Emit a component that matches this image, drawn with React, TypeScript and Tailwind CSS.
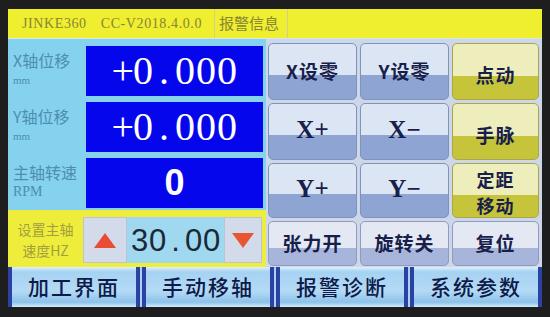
import React from "react";

const cjk = "font-['Noto_Sans_CJK_SC',sans-serif]";
const serif = "font-['Liberation_Serif','Noto_Sans_CJK_SC',serif]";

// fixed-width characters, like the panel's half-width font
function Mono({ text, cell }: { text: string; cell: string }) {
  return (
    <span className="flex">
      {text.split("").map((c, i) => (
        <span key={i} className={"text-center " + cell}>
          {c}
        </span>
      ))}
    </span>
  );
}

function Readout({ label, unit, unitSize, children }: { label: string; unit: string; unitSize: string; children: React.ReactNode }) {
  return (
    <div className="flex h-[50px]">
      <div className="w-[78px] pl-[5px] pt-[5px] text-[#4f8db0]">
        <p className={`${cjk} text-[16px] leading-[18px]`}>{label}</p>
        <p className={`font-['Liberation_Serif',serif] ${unitSize} leading-[14px] mt-[4px]`}>{unit}</p>
      </div>
      <div className="w-[177px] bg-[#0606ec] flex items-center justify-center text-white">{children}</div>
    </div>
  );
}

type Tone = "blue" | "olive" | "grey";

const tones: Record<Tone, string> = {
  blue: "border-[#7f93bd] bg-[linear-gradient(to_bottom,#dce5f3_56%,#8ea5d4_56%)]",
  olive: "border-[#a9a74a] bg-[linear-gradient(to_bottom,#eeedbc_58%,#c6c43a_58%)]",
  grey: "border-[#8f9cc0] bg-[linear-gradient(to_bottom,#e3e8f3_60%,#a8b5da_60%)]",
};

function Key({ tone, children, latin, low }: { tone: Tone; children: React.ReactNode; latin?: boolean; low?: boolean }) {
  return (
    <div
      className={`rounded-[5px] border flex flex-col items-center justify-center text-[#17204a] ${tones[tone]} ${
        low ? "pt-[8px]" : ""
      } ${latin ? "font-['Liberation_Serif',serif] font-bold text-[25px] pb-[3px]" : `${cjk} font-bold text-[19px] tracking-[1px]`}`}
    >
      {children}
    </div>
  );
}

function Tab({ children }: { children: React.ReactNode }) {
  return (
    <div className="flex-1 border-x-[4px] border-[#2b41a4] bg-[linear-gradient(to_bottom,#e0f0fc_0%,#a6d2f2_12%,#b4daf5_60%,#8cc2ea_88%,#d4ecfb_100%)] flex items-center justify-center">
      <span className={`${cjk} font-medium text-[21px] tracking-[2px] text-[#0d1a4a]`}>{children}</span>
    </div>
  );
}

export default function App() {
  return (
    <div className="w-[550px] h-[317px] bg-[#1e1e1e] pt-[9px] pl-[8px]">
      <div className="w-[534px] h-[298px] flex flex-col bg-[#cdd7e9]">
        {/* status bar */}
        <div className="h-[30px] flex bg-[#efee2f] border-b border-[#d4e6ee] text-[#878636]">
          <div className={`w-[207px] border-r border-[#cfcf96] flex items-center pl-[14px] gap-[14px] ${serif} text-[14px] tracking-[0.6px]`}>
            <span>JINKE360</span>
            <span>CC-V2018.4.0.0</span>
          </div>
          <div className={`w-[73px] border-r border-[#cfcf96] flex items-center pl-[4px] ${cjk} text-[15px]`}>报警信息</div>
          <div className="flex-1" />
        </div>

        <div className="flex h-[228px]">
          {/* readouts */}
          <div className="w-[258px] bg-[#84d2ee] flex flex-col">
            <div className="flex flex-col gap-[6px] pt-[7px]">
              <Readout label="X轴位移" unit="mm" unitSize="text-[11px]">
                <span className="font-['Liberation_Serif',serif] text-[40px] leading-none">
                  <Mono text="+0.000" cell="w-[21px]" />
                </span>
              </Readout>
              <Readout label="Y轴位移" unit="mm" unitSize="text-[11px]">
                <span className="font-['Liberation_Serif',serif] text-[40px] leading-none">
                  <Mono text="+0.000" cell="w-[21px]" />
                </span>
              </Readout>
              <Readout label="主轴转速" unit="RPM" unitSize="text-[14px]">
                <span className="font-['Liberation_Sans',sans-serif] font-bold text-[36px] leading-none">0</span>
              </Readout>
            </div>

            {/* spindle speed setter */}
            <div className="mt-[2px] h-[57px] bg-[#eeed3c] flex pt-[7px]">
              <div className={`w-[75px] flex flex-col items-center pt-[2px] text-[#a29f3e] ${cjk} text-[14px] leading-[21px]`}>
                <span>设置主轴</span>
                <span>速度HZ</span>
              </div>
              <div className="w-[44px] h-[46px] bg-[#d3dbea] border border-[#b9c4d8] flex items-center justify-center">
                <svg width="22" height="15" viewBox="0 0 22 15">
                  <polygon points="11,0 22,15 0,15" fill="#e94b34" />
                </svg>
              </div>
              <div className="w-[97px] h-[46px] bg-[#9fd8ef] flex items-center justify-center text-[#1a2838] font-['Liberation_Sans',sans-serif] text-[31px] leading-none">
                <Mono text="30.00" cell="w-[18px]" />
              </div>
              <div className="w-[38px] h-[46px] bg-[#d3dbea] border border-[#b9c4d8] flex items-center justify-center">
                <svg width="22" height="15" viewBox="0 0 22 15">
                  <polygon points="0,0 22,0 11,15" fill="#ea5531" />
                </svg>
              </div>
            </div>
          </div>

          {/* keypad */}
          <div className="flex-1 grid grid-cols-[89px_89px_87px] grid-rows-[57px_57px_55px_45px] gap-[3px] pl-[2px] pt-[4px]">
            <Key tone="blue">X设零</Key>
            <Key tone="blue">Y设零</Key>
            <Key tone="olive" low>点动</Key>
            <Key tone="blue" latin>X+</Key>
            <Key tone="blue" latin>X−</Key>
            <Key tone="olive" low>手脉</Key>
            <Key tone="blue" latin>Y+</Key>
            <Key tone="blue" latin>Y−</Key>
            <Key tone="olive">
              <span className="text-[18px] leading-[26px] mt-[2px]">定距</span>
              <span className="text-[18px] leading-[26px]">移动</span>
            </Key>
            <Key tone="grey">张力开</Key>
            <Key tone="grey">旋转关</Key>
            <Key tone="grey">复位</Key>
          </div>
        </div>

        {/* page tabs */}
        <div className="h-[40px] flex gap-[2px] bg-[#a9d2f0]">
          <Tab>加工界面</Tab>
          <Tab>手动移轴</Tab>
          <Tab>报警诊断</Tab>
          <Tab>系统参数</Tab>
        </div>
      </div>
    </div>
  );
}
